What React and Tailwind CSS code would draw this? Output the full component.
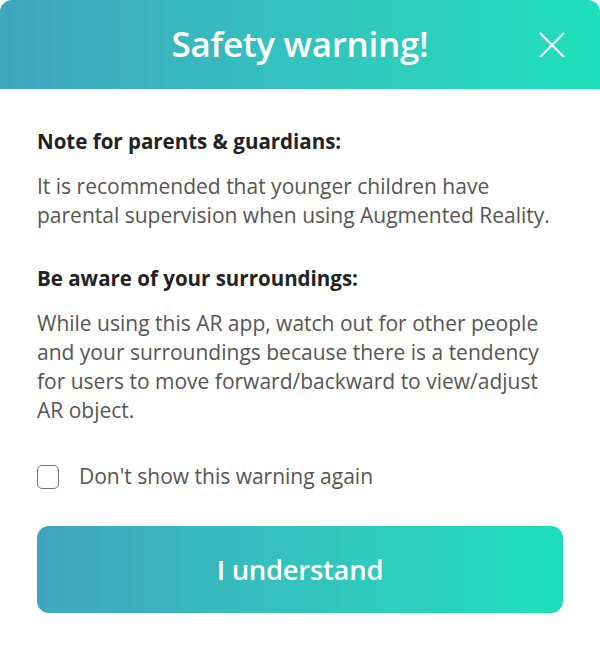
import { useState } from 'react';

export default function App() {
  const [checked, setChecked] = useState(false);

  return (
    <div className="w-[600px] h-[649px] bg-white font-['Open_Sans',sans-serif]">
      <div className="h-[89px] rounded-t-[12px] bg-gradient-to-r from-[#3fa5bf] to-[#1ce0bb] flex items-center justify-center relative">
        <h1 className="text-[35px] font-semibold text-white tracking-[-0.3px]">Safety warning!</h1>
        <button className="absolute right-[34px] top-[31px] w-[28px] h-[28px] text-white">
          <svg viewBox="0 0 28 28" className="w-[28px] h-[28px]" fill="none" stroke="currentColor" strokeWidth="2.2">
            <path d="M2 2L26 26M26 2L2 26" />
          </svg>
        </button>
      </div>

      <div className="px-[37px] pt-[38px]">
        <h2 className="text-[20.5px] font-bold text-[#222] leading-[29px]">Note for parents &amp; guardians:</h2>
        <p className="mt-[16px] text-[21px] text-[#555] leading-[29px]">
          It is recommended that younger children have parental supervision when using Augmented Reality.
        </p>

        <h2 className="mt-[34px] text-[20.5px] font-bold text-[#222] leading-[29px]">Be aware of your surroundings:</h2>
        <p className="mt-[16px] text-[21px] text-[#555] leading-[29px]">
          While using this AR app, watch out for other people and your surroundings because there is a tendency for users to move forward/backward to view/adjust AR object.
        </p>

        <label className="mt-[37px] flex items-center gap-[20px] cursor-pointer">
          <span
            onClick={() => setChecked(!checked)}
            className="w-[22px] h-[24px] rounded-[5px] border-[1.5px] border-[#777] bg-white flex items-center justify-center"
          >
            {checked && <span className="w-[10px] h-[10px] bg-[#2cc4bd] rounded-[2px]" />}
          </span>
          <span className="text-[21px] text-[#555] leading-[29px]">Don't show this warning again</span>
        </label>

        <button className="mt-[35px] w-full h-[87px] rounded-[12px] bg-gradient-to-r from-[#3fa5bf] to-[#1ce0bb] text-white text-[27.5px] font-semibold tracking-[-0.3px]">
          I understand
        </button>
      </div>
    </div>
  );
}
